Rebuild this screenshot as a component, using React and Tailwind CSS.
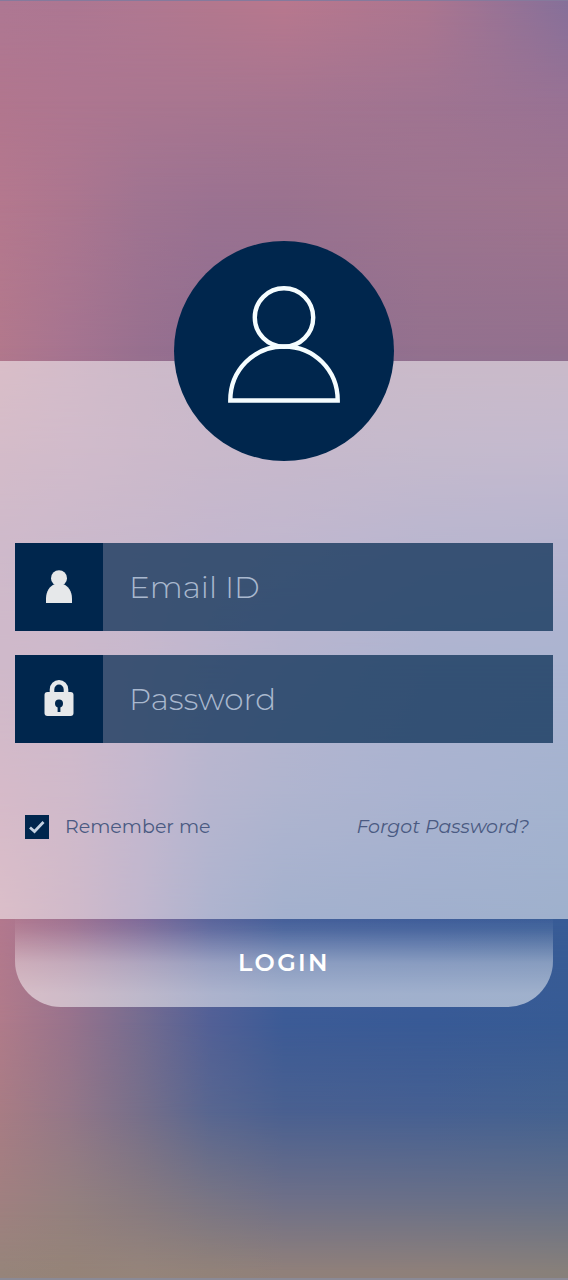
const stopsX = [0, 12, 25, 37, 50, 75, 100];

// Mesh background: each row lists one colour per horizontal stop, at a height in percent.
const meshRows = [
  { y: 0, colors: ['#ae7893', '#ad7792', '#b07891', '#b3788e', '#b8788e', '#ac7690', '#86709a'] },
  { y: 7.8, colors: ['#b1768e', '#ae7690', '#aa7690', '#a87690', '#a67590', '#a07491', '#987294'] },
  { y: 15.6, colors: ['#b4788e', '#ac768f', '#a07491', '#9b7291', '#9a728f', '#9d748f', '#9e748e'] },
  { y: 27, colors: ['#b2788c', '#a67490', '#98708f', '#906e90', '#8f6e90', '#94718e', '#92708e'] },
  { y: 35, colors: ['#a6738e', '#a07292', '#966f92', '#8f6e93', '#8c6d93', '#867096', '#84709a'] },
  { y: 43, colors: ['#9a6f92', '#926e94', '#8c6c95', '#846998', '#7c6a9a', '#6e669c', '#68649c'] },
  { y: 52, colors: ['#9c6e90', '#966e93', '#8a6c97', '#78689a', '#68649c', '#54629e', '#4e629e'] },
  { y: 62, colors: ['#a9708e', '#9d6f92', '#846b9a', '#68669c', '#5a649c', '#4c609e', '#42619c'] },
  { y: 71.5, colors: ['#b3788e', '#9f7090', '#7d6898', '#58629a', '#425d98', '#3c5b98', '#385c96'] },
  { y: 80, colors: ['#b07b8a', '#98738c', '#746c90', '#526096', '#3c5b96', '#385a96', '#375b94'] },
  { y: 87, colors: ['#a87c84', '#947788', '#766f8a', '#586690', '#4a6090', '#466092', '#446290'] },
  { y: 94, colors: ['#a08080', '#94807f', '#877a80', '#797584', '#6f7088', '#6a7088', '#667088'] },
  { y: 99.5, colors: ['#96847a', '#958378', '#95847a', '#928279', '#90807a', '#8e807a', '#87807a'] },
];

const rowGradient = (colors) =>
  `linear-gradient(to right, ${colors.map((c, i) => `${c} ${stopsX[i]}%`).join(', ')})`;

function MeshBackground() {
  return (
    <div aria-hidden="true" className="absolute inset-0 -z-10 border-t border-b-2 border-t-[#857a9c] border-b-[#8b8a96]">
      {meshRows.map((row, i) => {
        const fade =
          i === 0
            ? undefined
            : `linear-gradient(to bottom, transparent ${meshRows[i - 1].y}%, black ${row.y}%)`;
        return (
          <div
            key={row.y}
            className="absolute inset-0"
            style={{ backgroundImage: rowGradient(row.colors), maskImage: fade }}
          />
        );
      })}
    </div>
  );
}

function Avatar() {
  return (
    <div className="mx-auto -mt-30 flex size-55 items-center justify-center rounded-full bg-[#00264d] pb-3">
      <svg viewBox="0 0 114 118" className="h-[118px] w-[114px]" fill="none" stroke="#f5fdff" strokeWidth="4.4" aria-hidden="true">
        <circle cx="57" cy="31.5" r="29.2" />
        <path d="M3.3 114.5C3.3 84 27 60.500 57 60.500s53.700 23.500 53.700 54z" />
      </svg>
    </div>
  );
}

function UserIcon() {
  return (
    <svg viewBox="0 0 26 33" className="h-[33px] w-[26px]" fill="#e6e8ea" aria-hidden="true">
      <circle cx="13" cy="8.2" r="8" />
      <path d="M0 33v-4.500C0 21 4 16 8.500 14.200h9C22 16 26 21 26 28.500V33z" />
    </svg>
  );
}

function LockIcon() {
  return (
    <svg viewBox="0 0 30 36" className="h-9 w-[30px]" aria-hidden="true">
      <path d="M8 14V9.500a7 7.200 0 0 1 14 0v4.500" fill="none" stroke="#e6e8ea" strokeWidth="4.6" />
      <rect x="0.5" y="12" width="29" height="24" rx="3" fill="#e6e8ea" />
      <circle cx="15" cy="23.5" r="4" fill="#00264d" />
      <path d="M13.600 25h2.800v7h-2.800z" fill="#00264d" />
    </svg>
  );
}

function Field({ id, label, type, icon }) {
  return (
    <div className="flex h-22">
      <label
        htmlFor={id}
        aria-label={label}
        className="flex w-22 shrink-0 items-center justify-center bg-[#00264d] pb-0.5"
      >
        {icon}
      </label>
      <input
        id={id}
        type={type}
        placeholder={label}
        className="min-w-0 flex-1 bg-[#00264d]/70 px-[26px] text-[31px] font-light text-white outline-none placeholder:text-[#a9b8ce]"
      />
    </div>
  );
}

export default function App() {
  return (
    <main className="relative isolate min-h-screen overflow-hidden pt-[361px] font-['Montserrat','Inter',sans-serif]">
      <MeshBackground />
      <form onSubmit={(e) => e.preventDefault()}>
        <div className="flow-root bg-white/52 px-[15px] pb-20">
          <Avatar />
          <div className="mt-[82px] flex flex-col gap-6">
            <Field id="email" label="Email ID" type="email" icon={<UserIcon />} />
            <Field id="password" label="Password" type="password" icon={<LockIcon />} />
          </div>
          <div className="mt-[72px] flex h-6 items-center justify-between pr-6 pl-2.5 text-[19px] leading-6 text-[#4a5a82]">
            <label className="flex items-center gap-4">
              <span className="grid size-6 place-items-center">
                <input
                  type="checkbox"
                  defaultChecked
                  className="peer col-start-1 row-start-1 size-6 appearance-none bg-[#00264d]"
                />
                <svg
                  viewBox="0 0 24 24"
                  className="pointer-events-none invisible col-start-1 row-start-1 size-6 peer-checked:visible"
                  fill="none"
                  stroke="#c4d2e2"
                  strokeWidth="2.8"
                  aria-hidden="true"
                >
                  <path d="M5 12.500l4.500 4L18.500 7" />
                </svg>
              </span>
              Remember me
            </label>
            <a href="#forgot" className="italic">
              Forgot Password?
            </a>
          </div>
        </div>
        <div className="px-[15px]">
          <button
            type="submit"
            className="h-22 w-full rounded-b-[46px] bg-[linear-gradient(to_bottom,rgb(255_255_255/0.02),rgb(255_255_255/0.08)_12%,rgb(255_255_255/0.4)_50%,rgb(255_255_255/0.52)_85%)] text-2xl font-semibold tracking-widest text-white"
          >
            LOGIN
          </button>
        </div>
      </form>
    </main>
  );
}
